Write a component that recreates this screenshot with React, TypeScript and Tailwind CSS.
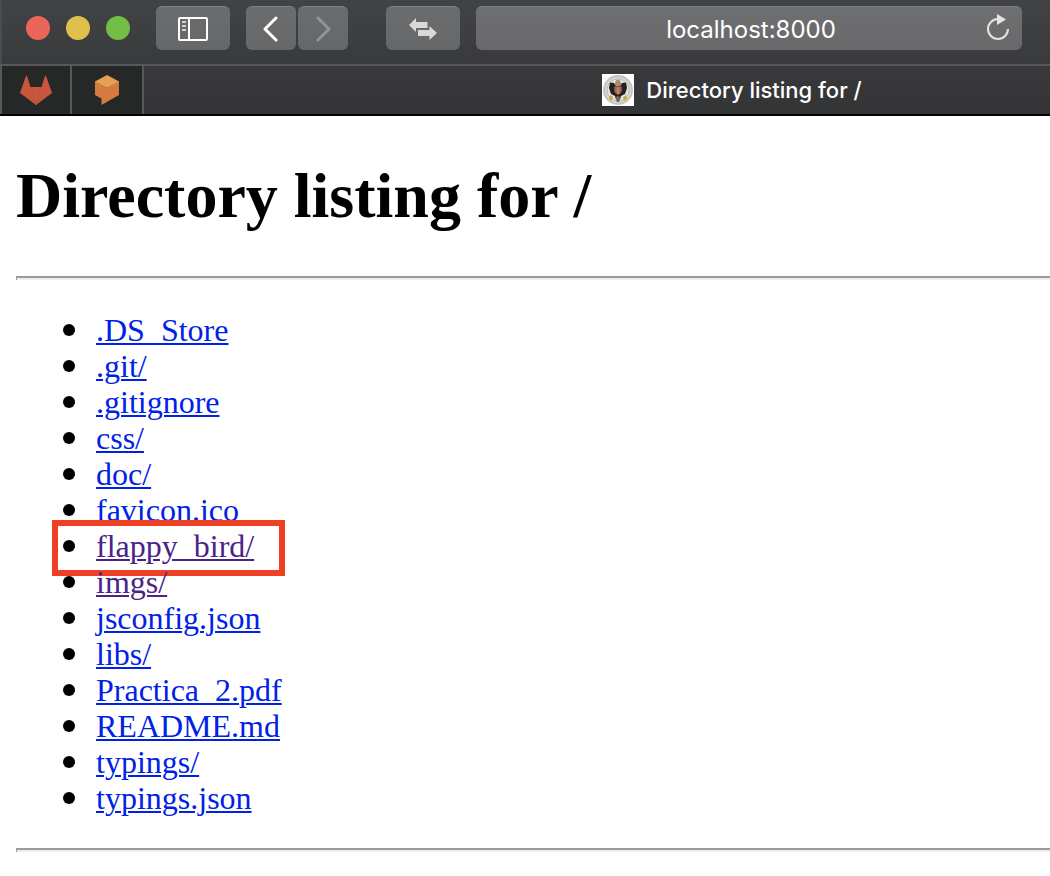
import React from "react";

type Entry = { name: string; visited?: boolean; highlighted?: boolean };

const entries: Entry[] = [
  { name: ".DS_Store" },
  { name: ".git/" },
  { name: ".gitignore" },
  { name: "css/" },
  { name: "doc/" },
  { name: "favicon.ico" },
  { name: "flappy_bird/", visited: true, highlighted: true },
  { name: "imgs/", visited: true },
  { name: "jsconfig.json" },
  { name: "libs/" },
  { name: "Practica_2.pdf" },
  { name: "README.md" },
  { name: "typings/" },
  { name: "typings.json" },
];

const toolButton =
  "flex h-11 shrink-0 items-center justify-center rounded-md border-t border-[#818284] bg-linear-to-b from-[#6b6c6e] to-[#666769]";

function WindowControls() {
  return (
    <div className="flex shrink-0 gap-4">
      <button aria-label="Close" className="size-6 rounded-full bg-[#ec6559]" />
      <button aria-label="Minimize" className="size-6 rounded-full bg-[#e0c04c]" />
      <button aria-label="Zoom" className="size-6 rounded-full bg-[#72be47]" />
    </div>
  );
}

function Toolbar() {
  return (
    <div className="flex h-16 items-start border-l-2 border-[#4b4c4e] bg-linear-to-b from-[#424345] to-[#393a3c] pt-1.5 pr-7 pl-6">
      <div className="flex h-11 items-center">
        <WindowControls />
      </div>
      <button aria-label="Show sidebar" className={`${toolButton} ml-[26px] w-[74px]`}>
        <svg width="30" height="24" viewBox="0 0 30 24" fill="none">
          <rect x="1" y="1" width="28" height="22" rx="1" stroke="#fff" strokeWidth="2" />
          <path d="M11 1V23" stroke="#fff" strokeWidth="2" />
          <path d="M4 5H8M4 9H8M4 13H8" stroke="#d0d0d1" strokeWidth="2" />
        </svg>
      </button>
      <div className="ml-4 flex shrink-0 gap-0.5">
        <button aria-label="Back" className={`${toolButton} w-[50px]`}>
          <svg width="16" height="26" viewBox="0 0 16 26" fill="none">
            <path d="M13 2L2 13L13 24" stroke="#fff" strokeWidth="3" strokeLinecap="round" strokeLinejoin="round" />
          </svg>
        </button>
        <button aria-label="Forward" className={`${toolButton} w-[50px]`}>
          <svg width="16" height="26" viewBox="0 0 16 26" fill="none">
            <path d="M3 2L14 13L3 24" stroke="#939496" strokeWidth="3" strokeLinecap="round" strokeLinejoin="round" />
          </svg>
        </button>
      </div>
      <button aria-label="Transfer" className={`${toolButton} ml-[38px] w-[74px]`}>
        <svg width="28" height="22" viewBox="0 0 28 22" fill="#d9d9da">
          <path d="M0 7L7 0V4H18.500V10H7V14Z" />
          <path d="M28 15L20.500 22V18H9V12H20.500V8Z" />
        </svg>
      </button>
      <div className="relative ml-4 min-w-0 flex-1">
        <input
          aria-label="Address"
          defaultValue="localhost:8000"
          className="h-11 w-full rounded-md border-t border-[#818284] bg-linear-to-b from-[#6e6f71] to-[#69696b] pt-0.5 pr-10 pl-11 text-center font-['Inter',sans-serif] text-2xl text-white outline-none"
        />
        <button aria-label="Reload" className="absolute top-2 right-3">
          <svg width="24" height="28" viewBox="0 0 24 28" fill="none">
            <path d="M12 5A10 10 0 1 0 22 15" stroke="#e4e4e5" strokeWidth="2" />
            <path d="M11 0L20 5.500L11 11Z" fill="#e4e4e5" />
          </svg>
        </button>
      </div>
    </div>
  );
}

function SealIcon() {
  return (
    <svg width="32" height="32" viewBox="0 0 32 32" className="shrink-0">
      <rect width="32" height="32" fill="#fff" />
      <circle cx="16" cy="16" r="14" fill="#d6d6d4" stroke="#c4c4c2" strokeWidth="2" />
      <circle cx="16" cy="16" r="11" fill="#e6e5e2" stroke="#bcbbb8" strokeWidth="1" />
      <path d="M8 8.500L12 9L14 12L18 12L20 9L24 8.500L25 14L23 20L19 22L18 25H14L13 22L9 20L7 14Z" fill="#24211f" />
      <path d="M12.500 10L14 6.500L16 5.500L18 6.500L19.500 10L17.500 12H14.500Z" fill="#a58f6c" />
      <path d="M12.500 12.500H19.500V18L16 21L12.500 18Z" fill="#c4806a" />
      <path d="M14 13V19M18 13V19" stroke="#8f4d45" strokeWidth="1" />
      <path d="M8 21L11 23L10 27L7 25ZM24 21L21 23L22 27L25 25Z" fill="#c9a83c" />
      <path d="M13 23L16 22L19 23L17 28H15Z" fill="#69635a" />
    </svg>
  );
}

function TabBar() {
  return (
    <div className="flex h-[52px] items-stretch border-t-2 border-b-2 border-t-[#57585a] border-b-black bg-linear-to-b from-[#39393b] to-[#333436]">
      <a href="#gitlab" aria-label="GitLab" className="flex w-[72px] shrink-0 items-center justify-center border-x-2 border-[#57585a] bg-[#262828]">
        <svg width="32" height="30" viewBox="0 0 32 30">
          <path d="M0 18L6 1Q6.500 0 7 1L10.500 12H21.500L25 1Q25.500 0 26 1L32 18L16 30Z" fill="#c8573e" />
          <path d="M10.500 12L16 30L21.500 12M1.500 17L5 13L16 30L27 13L30.500 17" fill="none" stroke="#bd503a" strokeWidth="0.500" />
        </svg>
      </a>
      <a href="#cube" aria-label="Cube" className="flex w-[72px] shrink-0 items-center justify-center border-r-2 border-[#57585a] bg-[#262828]">
        <svg width="24" height="30" viewBox="0 0 24 30">
          <path d="M0 6L12 13L24 6V20L6.500 30V23.500L0 20Z" fill="#d67b3f" />
          <path d="M12 0L24 6.500L12 13L0 6.500Z" fill="#e6a04f" />
        </svg>
      </a>
      <a href="#tab" className="flex min-w-0 flex-1 items-center justify-center gap-3 pl-[270px] font-['Inter',sans-serif] text-[22px] font-medium whitespace-nowrap text-white">
        <SealIcon />
        <span>Directory listing for /</span>
      </a>
    </div>
  );
}

function Rule() {
  return <hr className="h-1 border-0 border-t-2 border-l border-[#9a9a9a] bg-[#eeeeee]" />;
}

export default function App() {
  return (
    <div className="min-h-screen overflow-x-hidden bg-white">
      <header>
        <Toolbar />
        <TabBar />
      </header>
      <main className="pt-11 pl-4 font-['Liberation_Serif',serif] text-black">
        <h1 className="mb-11 text-[64px] leading-[72px] font-bold">Directory listing for /</h1>
        <Rule />
        <ul className="my-8 pl-[47px] text-[32px] leading-9">
          {entries.map((entry) => (
            <li key={entry.name} className="relative flex items-center gap-[21px]">
              <span className="size-3 shrink-0 rounded-full bg-black" />
              <a
                href={`#${entry.name}`}
                className={`underline decoration-2 underline-offset-2 ${entry.visited ? "text-[#4b2387]" : "text-[#0021e6]"}`}
              >
                {entry.name}
              </a>
              {entry.highlighted && (
                <span className="pointer-events-none absolute -top-2 -left-[11px] h-14 w-[233px] border-6 border-[#ef4025]" />
              )}
            </li>
          ))}
        </ul>
        <Rule />
      </main>
    </div>
  );
}
